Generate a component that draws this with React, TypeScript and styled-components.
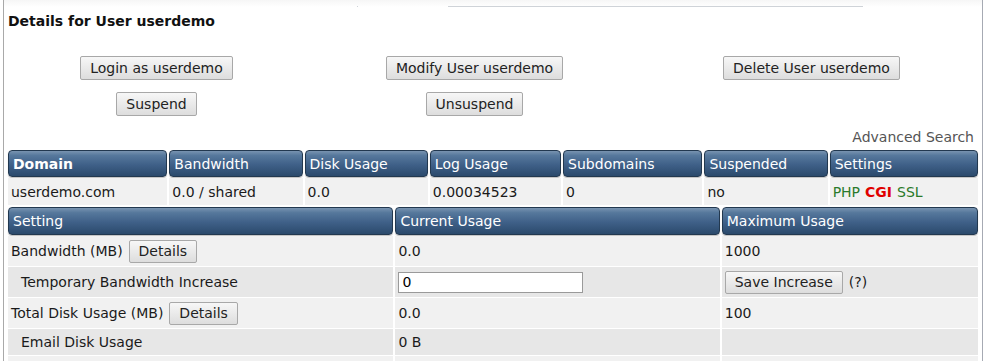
import React from 'react';
import styled, { createGlobalStyle } from 'styled-components';

const GlobalStyle = createGlobalStyle`
  html, body {
    margin: 0;
    padding: 0;
    background: #ffffff;
  }
  body {
    font-family: "DejaVu Sans", Verdana, sans-serif;
    font-size: 14px;
    color: #1a1a1a;
  }
`;

const Page = styled.div`
  margin-left: 3px;
  width: 980px;
  height: 361px;
  overflow: hidden;
  border-left: 1px solid #a9a9a9;
  border-right: 1px solid #a6aab3;
  box-sizing: border-box;
`;

const TopStrip = styled.div`
  display: flex;
  align-items: flex-end;
  height: 7px;
  background: linear-gradient(#f6f6f6, #ffffff);
`;

const TopLine = styled.div<{ left: number; width: number }>`
  margin-left: ${({ left }) => left}px;
  width: ${({ width }) => width}px;
  height: 1px;
  background: #cfd3d8;
`;

const Content = styled.div`
  padding: 6px 4px 0 2px;
`;

const Title = styled.h3`
  margin: 0 0 0 2px;
  font-size: 14px;
  font-weight: bold;
  color: #111;
  line-height: 16px;
`;

const ActionGrid = styled.div`
  display: grid;
  grid-template-columns: 301px 335px 339px;
  row-gap: 12px;
  margin-top: 27px;
  justify-items: center;
`;

const Button = styled.button<{ h?: number }>`
  height: ${({ h }) => h || 24}px;
  padding: 0 9px;
  font-family: "DejaVu Sans", Verdana, sans-serif;
  font-size: 14px;
  color: #222;
  background: linear-gradient(#f7f7f7, #dddddd);
  border: 1px solid #a8a8a8;
  border-radius: 2px;
  cursor: pointer;
`;

const AdvancedRow = styled.div`
  display: flex;
  justify-content: flex-end;
  align-items: center;
  padding: 11px 4px 0 0;
  height: 20px;
  margin-bottom: 2px;
  color: #555;
  font-size: 14px;
`;

const Table = styled.table`
  width: 974px;
  border-collapse: separate;
  border-spacing: 2px 1px;
  table-layout: fixed;
`;

const HeadCell = styled.th<{ strong?: boolean; h?: number }>`
  height: ${({ h }) => h || 25}px;
  padding: 0 0 0 4px;
  text-align: left;
  font-weight: ${({ strong }) => (strong ? 'bold' : 'normal')};
  font-size: 14px;
  color: #ffffff;
  background: linear-gradient(#7893b0 0%, #56789c 18%, #3f6088 55%, #2b4a6c 100%);
  border: 1px solid #22384f;
  border-radius: 4px;
  box-shadow: 0 1px 1px rgba(0, 0, 0, 0.25);
  white-space: nowrap;
  overflow: hidden;
`;

const Row = styled.tr<{ shade?: boolean }>`
  background: ${({ shade }) => (shade ? '#e7e7e7' : '#f1f1f1')};
`;

const Cell = styled.td<{ indent?: boolean; h?: number }>`
  height: ${({ h }) => h || 27}px;
  padding: 0 0 0 ${({ indent }) => (indent ? 13 : 3)}px;
  font-size: 14px;
  color: #1a1a1a;
  background: inherit;
  white-space: nowrap;
`;

const Inline = styled.div`
  display: flex;
  align-items: center;
  gap: 6px;
`;

const TextInput = styled.input`
  width: 185px;
  height: 21px;
  box-sizing: border-box;
  padding: 0 3px;
  font-family: "DejaVu Sans", Verdana, sans-serif;
  font-size: 14px;
  border: 1px solid #9a9a9a;
  background: #fff;
`;

const Flag = styled.span<{ off?: boolean }>`
  color: ${({ off }) => (off ? '#e00000' : '#2a7a2a')};
  font-weight: ${({ off }) => (off ? 'bold' : 'normal')};
  margin-right: 5px;
`;

const domainCols = [159, 133, 123, 131, 139, 123, 148];
const settingCols = [385, 324, 256];

export default function App() {
  return (
    <>
      <GlobalStyle />
      <Page>
        <TopStrip>
          <TopLine left={353} width={1} />
          <TopLine left={90} width={415} />
        </TopStrip>
        <Content>
          <Title>Details for User userdemo</Title>

          <ActionGrid>
            <Button>Login as userdemo</Button>
            <Button>Modify User userdemo</Button>
            <Button>Delete User userdemo</Button>
            <Button>Suspend</Button>
            <Button>Unsuspend</Button>
            <span />
          </ActionGrid>

          <AdvancedRow>Advanced Search</AdvancedRow>

          <Table>
            <colgroup>
              {domainCols.map((w, i) => (
                <col key={i} style={{ width: w }} />
              ))}
            </colgroup>
            <thead>
              <tr>
                <HeadCell strong>Domain</HeadCell>
                <HeadCell>Bandwidth</HeadCell>
                <HeadCell>Disk Usage</HeadCell>
                <HeadCell>Log Usage</HeadCell>
                <HeadCell>Subdomains</HeadCell>
                <HeadCell>Suspended</HeadCell>
                <HeadCell>Settings</HeadCell>
              </tr>
            </thead>
            <tbody>
              <Row>
                <Cell>userdemo.com</Cell>
                <Cell>0.0 / shared</Cell>
                <Cell>0.0</Cell>
                <Cell>0.00034523</Cell>
                <Cell>0</Cell>
                <Cell>no</Cell>
                <Cell>
                  <Flag>PHP</Flag>
                  <Flag off>CGI</Flag>
                  <Flag>SSL</Flag>
                </Cell>
              </Row>
            </tbody>
          </Table>

          <Table>
            <colgroup>
              {settingCols.map((w, i) => (
                <col key={i} style={{ width: w }} />
              ))}
            </colgroup>
            <thead>
              <tr>
                <HeadCell h={26}>Setting</HeadCell>
                <HeadCell h={26}>Current Usage</HeadCell>
                <HeadCell h={26}>Maximum Usage</HeadCell>
              </tr>
            </thead>
            <tbody>
              <Row>
                <Cell h={30}>
                  <Inline>
                    Bandwidth (MB) <Button h={23}>Details</Button>
                  </Inline>
                </Cell>
                <Cell h={30}>0.0</Cell>
                <Cell h={30}>1000</Cell>
              </Row>
              <Row shade>
                <Cell h={30} indent>
                  Temporary Bandwidth Increase
                </Cell>
                <Cell h={30}>
                  <TextInput defaultValue="0" />
                </Cell>
                <Cell h={30}>
                  <Inline>
                    <Button h={23}>Save Increase</Button> (?)
                  </Inline>
                </Cell>
              </Row>
              <Row>
                <Cell h={30}>
                  <Inline>
                    Total Disk Usage (MB) <Button h={23}>Details</Button>
                  </Inline>
                </Cell>
                <Cell h={30}>0.0</Cell>
                <Cell h={30}>100</Cell>
              </Row>
              <Row shade>
                <Cell indent h={26}>Email Disk Usage</Cell>
                <Cell h={26}>0 B</Cell>
                <Cell h={26} />
              </Row>
              <Row>
                <Cell>&nbsp;</Cell>
                <Cell />
                <Cell />
              </Row>
            </tbody>
          </Table>
        </Content>
      </Page>
    </>
  );
}
